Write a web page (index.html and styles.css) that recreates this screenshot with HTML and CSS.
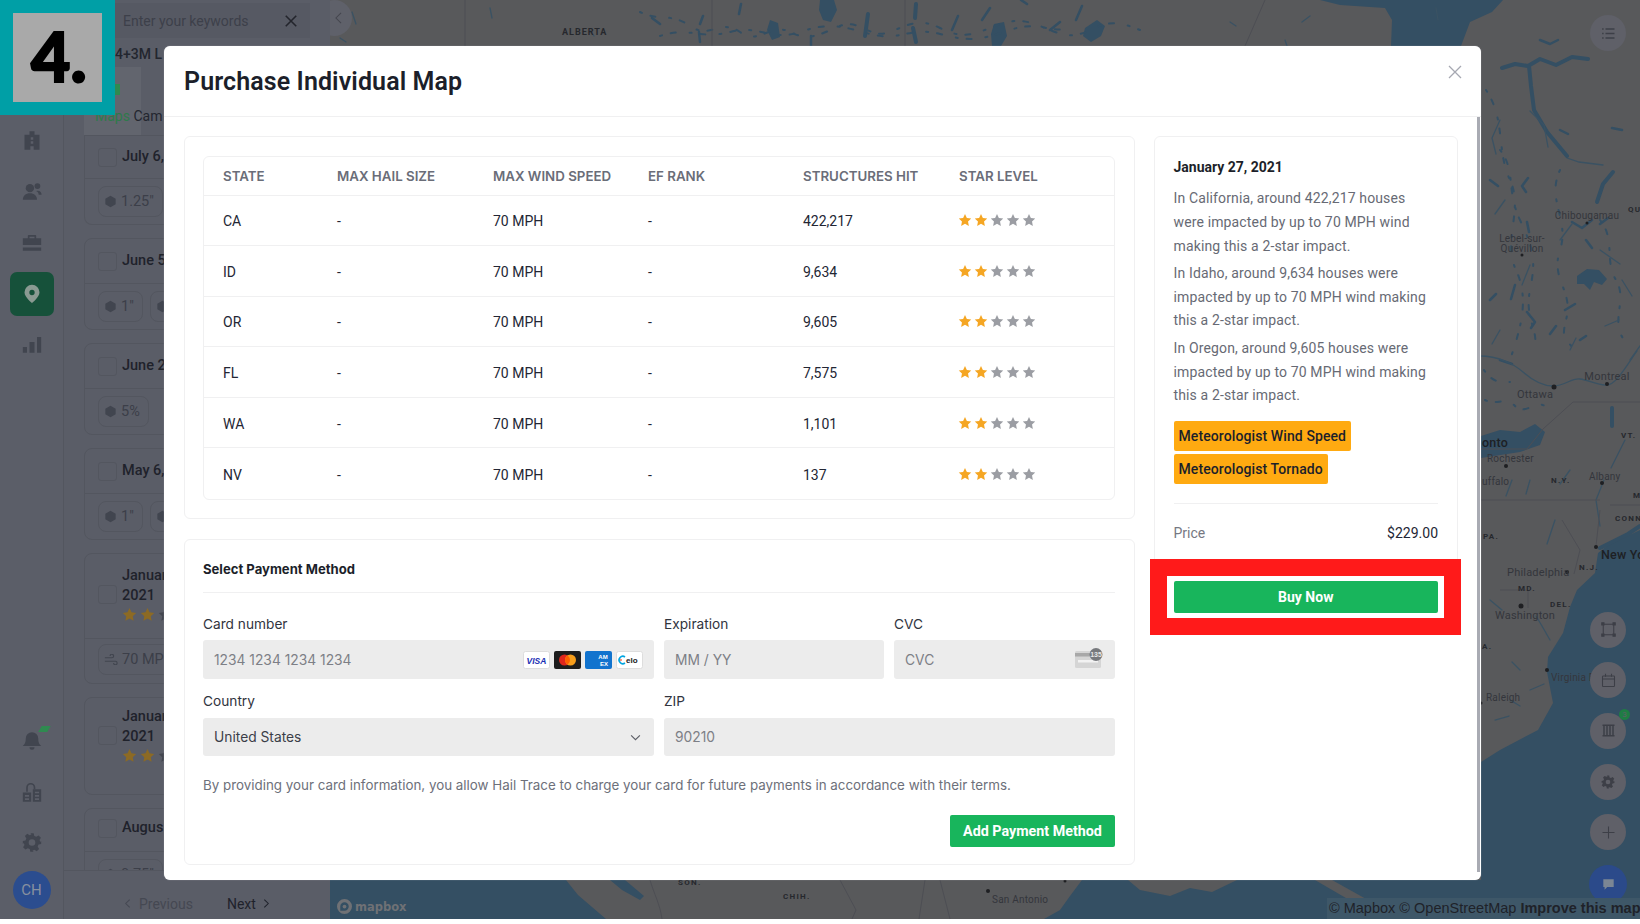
FILE: index.html
```html
<!DOCTYPE html>
<html lang="en">
<head>
<meta charset="utf-8">
<title>Purchase Individual Map</title>
<link rel="stylesheet" href="styles.css">
</head>
<body>
<svg class="defs" width="0" height="0" aria-hidden="true">
  <symbol id="star" viewBox="0 0 24 24"><path d="M12 1.6l3.2 6.9 7.5.9-5.5 5.2 1.4 7.5L12 18.4l-6.6 3.7 1.4-7.5L1.300 9.400l7.500-.9z"/></symbol>
  <symbol id="hex" viewBox="0 0 24 24"><path d="M12 1.500l9.500 5.300v10.400L12 22.500l-9.500-5.300V6.800z"/></symbol>
</svg>
<div class="app">
  <nav class="sidebar">
    <div class="nav-top">
      <svg class="nav-icon" viewBox="0 0 24 24"><path d="M9 1h6v4h6v18H3V5h6zM10.500 8v3h3V8zm0 5v3h3v-3zM10 23h4v-4h-4z" fill-rule="evenodd"/></svg>
      <svg class="nav-icon" viewBox="0 0 24 24"><circle cx="9.500" cy="8" r="5"/><path d="M1 22c0-5 3.500-8 8.500-8s8.500 3 8.500 8z"/><circle cx="18.500" cy="5.500" r="3.500"/><path d="M19 11c3 0 4.500 2 4.500 5H20c0-2-1-3.500-3-4.500z"/></svg>
      <svg class="nav-icon" viewBox="0 0 24 24"><path d="M8 3h8a1 1 0 0 1 1 1v3h6v8H1V7h6V4a1 1 0 0 1 1-1zm1 2v2h6V5zM1 18h22v4H1z" fill-rule="evenodd"/></svg>
      <div class="nav-active"><svg class="pin" viewBox="0 0 24 24"><path d="M12 1a9 9 0 0 1 9 9c0 6-9 13-9 13S3 16 3 10a9 9 0 0 1 9-9zm0 6a3.200 3.200 0 1 0 0 6.400A3.200 3.200 0 0 0 12 7z" fill-rule="evenodd"/></svg></div>
      <svg class="nav-icon" viewBox="0 0 24 24"><path d="M1 15h5v7H1zM9 9h6v13H9zM18 3h5v19h-5z"/></svg>
    </div>
    <div class="nav-bottom">
      <div class="bell-wrap">
        <svg class="nav-icon" viewBox="0 0 24 24"><path d="M12 2a7.500 7.500 0 0 1 7.500 7.500c0 5 1.500 7 3.500 9H1c2-2 3.500-4 3.500-9A7.500 7.500 0 0 1 12 2zM9 20h6a3 3 0 0 1-6 0z"/></svg>
        <span class="bell-badge"></span>
      </div>
      <svg class="nav-icon" viewBox="0 0 24 24"><path d="M1 12h10v11H1zM13 8h10v15H13zM3.500 15v2h5v-2zm0 4v2h5v-2zM15.500 11v2h5v-2zm0 4v2h5v-2zm0 4v2h5v-2z" fill-rule="evenodd"/><path d="M6 11V6a4.500 4.500 0 0 1 9 0v2" fill="none" stroke-width="2" stroke="#41454f"/></svg>
      <svg class="nav-icon nav-gear" viewBox="0 0 24 24"><path d="M10 1h4l.7 3.200 2.400 1 2.800-1.700 2.800 2.800-1.700 2.800 1 2.400L23 10.200v3.600l-3.200.7-1 2.400 1.700 2.800-2.800 2.800-2.800-1.700-2.400 1L14 23h-4l-.7-3.200-2.400-1-2.800 1.700-2.800-2.800 1.700-2.800-1-2.400L1 13.800v-3.600l3.200-.7 1-2.400L3.500 4.300l2.800-2.800 2.800 1.700 2.400-1zM12 8a4 4 0 1 0 0 8 4 4 0 0 0 0-8z" fill-rule="evenodd"/></svg>
      <div class="avatar">CH</div>
    </div>
  </nav>

  <aside class="list">
    <div class="search"><span class="search-text">Enter your keywords</span><svg class="search-x" viewBox="0 0 16 16"><path d="M2 2l12 12M14 2L2 14"/></svg></div>
    <div class="list-title">4+3M L</div>
    <div class="tabs"><div class="tab"><span class="tab-mark"></span><span class="tab-green">Maps</span> <span class="tab-plain">Cam</span></div></div>
    <div class="cards">
      <section class="card card-first">
        <div class="card-head"><span class="check"></span><span class="date">July 6,</span></div>
        <div class="chips"><span class="chip"><svg class="chip-ic"><use href="#hex"/></svg>1.25"</span></div>
      </section>
      <section class="card">
        <div class="card-head"><span class="check"></span><span class="date">June 5</span></div>
        <div class="chips"><span class="chip"><svg class="chip-ic"><use href="#hex"/></svg>1"</span><span class="chip"><svg class="chip-ic"><use href="#hex"/></svg></span></div>
      </section>
      <section class="card">
        <div class="card-head"><span class="check"></span><span class="date">June 2</span></div>
        <div class="chips"><span class="chip"><svg class="chip-ic"><use href="#hex"/></svg>5%</span></div>
      </section>
      <section class="card">
        <div class="card-head"><span class="check"></span><span class="date">May 6,</span></div>
        <div class="chips"><span class="chip"><svg class="chip-ic"><use href="#hex"/></svg>1"</span><span class="chip"><svg class="chip-ic"><use href="#hex"/></svg></span></div>
      </section>
      <section class="card">
        <div class="card-head card-head-tall"><span class="check"></span><div class="date-block"><span class="date">Januar<br>2021</span><span class="mini-stars"><svg class="mini-star"><use href="#star"/></svg><svg class="mini-star"><use href="#star"/></svg><svg class="mini-star off"><use href="#star"/></svg></span></div></div>
        <div class="chips chips-lift"><span class="chip"><svg class="wind" viewBox="0 0 16 12"><path d="M1 4h8a2 2 0 1 0-2-2M1 8h12a2 2 0 1 1-2 2"/></svg>70 MPH</span></div>
      </section>
      <section class="card card-plain">
        <div class="card-head card-head-plain"><span class="check"></span><div class="date-block"><span class="date">Januar<br>2021</span><span class="mini-stars"><svg class="mini-star"><use href="#star"/></svg><svg class="mini-star"><use href="#star"/></svg><svg class="mini-star off"><use href="#star"/></svg></span></div></div>
      </section>
      <section class="card">
        <div class="card-head card-head-short"><span class="check"></span><span class="date">Augus</span></div>
        <div class="chips chips-top"><span class="chip"><svg class="chip-ic"><use href="#hex"/></svg>0.75"</span></div>
      </section>
    </div>
    <footer class="pager">
      <span class="prev"><svg class="pg-ic" viewBox="0 0 8 12"><path d="M6.500 1.500L2 6l4.500 4.500"/></svg>Previous</span>
      <span class="next">Next<svg class="pg-ic" viewBox="0 0 8 12"><path d="M1.500 1.500L6 6l-4.500 4.500"/></svg></span>
    </footer>
  </aside>

  <main class="map">
    <svg class="map-svg" viewBox="330 0 1310 919" preserveAspectRatio="none">
      <g class="water">
        <path d="M330 880H566L578 895 606 919H330z"/>
        <path d="M610 880L625 880 644 896 640 900 622 890z"/>
        <path d="M1082 880L1070 896 1060 910 1044 919H1640V880z"/>
        <path d="M1320 0H1503L1492 12 1470 22 1461 46H1391L1392 20 1385 8 1340 5z"/>
        <path d="M1640 530L1607 546 1598 553 1595 573 1577 590 1570 607 1563 633 1548 657 1547 672 1553 703 1538 730 1500 750 1481 762V880H1640z"/>
        <path d="M1481 436L1500 430 1520 432 1535 424 1545 432 1540 445 1520 452 1481 458z"/>
        <path d="M1577 276l10-7 12 1 8 9-5 6-8-3-4 8-6-6-7 0z"/>
        <path d="M820 0h14l3 10-6 12-8-2-4-10zM1085 28l12-8 8 6-4 10-10 6-8-6zM994 24l10-2 3 14-6 10h-9l-1-12zM770 20l8 3 2 14-8 3-5-10z"/>
      </g>
      <g class="land">
        <path d="M1128 880H1237L1212 892 1190 888 1170 896 1140 890z"/>
        <path d="M1315 880H1332L1402 919H1382z"/>
      </g>
      <g class="lake-thick">
        <path d="M1502 68l13-4 13 2 12-7 16 6 16-8 16 2M1529 66l2 20 3 24 13 22 20 24"/>
        <path d="M1613 172l-10 12-6 18"/>
        <path d="M1612 408v18M1600 548l28-14 12-8"/>
        <path d="M868 14l-3 22M916 4l-1 14M913 28l3 14"/>
      </g>
      <g class="lake-mid">
        <path d="M1528 178l-6 8 4 6M1527 222l2 10M1572 222l10 6 10-8M1586 240l6 8M1527 312l8 10-4 6M1550 334l6-8M1580 340l6-4"/>
        <path d="M741 4l-2 10M703 16l-3 8M699 32l1 10M652 18l8 6M958 16l-6 14M990 8l-8 12M1060 22l-10 8M1082 6l-6 14M811 36l0 10M1021 0l6 4M1500 360l12 4M1490 300l6-6"/>
        <path d="M1540 40l10 4 8-4M1490 180l8 6M1600 224l8-6M1560 130l8 4M1515 285l-4 14M1565 310l10-6M1612 128l10 2"/>
      </g>
      <g class="speckle">
        <path d="M640 12c20 10 30 0 50 14s30-8 50 6 30-10 50 0 30 2 50-6 30 14 50 6 30-14 50-4 30 8 50 0 30-10 50-2 30 14 50 4 30-8 50 0"/>
        <path d="M660 36c30-10 40 4 70-4s40 10 70 0 40-6 70 2 40-8 70 0 40 6 70-4 40 4 60-2"/>
        <path d="M1486 90c20 30 10 60 24 90s-8 60 6 90 4 60-6 90M1500 150c16 20 6 40 20 70s16 40 10 70 10 40 4 60"/>
        <path d="M1560 170c-14 30 10 50 0 80s14 40 6 70 10 20 4 30M1600 220c16 20 4 40 16 60s-6 40 8 60"/>
        <path d="M1485 400c12 6 20-4 30 6s20-6 30 0M1484 370c6 10 16 14 26 12"/>
      </g>
      <g class="rivers">
        <path d="M1480 356c18 0 34 8 43 16s18 14 30 14 18-8 27-7 18 7 27 6 16-14 30-34M1567 158l12 4 24 3M1530 111l14 14 4 22"/>
        <path d="M1500 120l-8 18 4 16M1505 200l-10 14M1560 240l12-16M1530 265l-8 20M1600 250l20 14M1605 326l14-6M1622 280l10 16M1500 330l-8 14M1570 350l6-12M1630 360l10-14"/>
        <path d="M1550 640l-8-14 -6-10M1530 690l14-6M1510 700l10 6M1495 720l14-4M1490 600l12 10M1520 670l-8-8M1555 520l-8 24M1570 470l-10 14M1512 480l-6 16M1530 480l-4 14M1604 480l-8 20 4 26M1625 440l-14 28"/>
        <path d="M352 12l4 12M340 38l6 4M490 8l2 10M590 30l4 6M1230 22l6 4M1302 22l8-6M1436 8l2 12M1285 40l2 6"/>
      </g>
      <g class="lines">
        <path d="M1640 402H1573L1543 429 1527 449H1481"/>
        <path d="M1481 500H1600M1600 510l-4 36M1640 505h-30M1500 590h26M1528 590v18M1562 520l18 30-6 24"/>
        <path d="M465 0v46M712 0v46M905 0v46M1265 0l-20 46M650 880c4 14 10 24 12 39M840 880l16 30 -4 9M925 880l-6 39M940 880l10 39"/>
      </g>
      <g class="dots">
        <circle cx="1587" cy="223" r="1.500"/><circle cx="1522" cy="255" r="1.500"/><circle cx="1607" cy="384" r="2"/><circle cx="1554" cy="387" r="2.500"/><circle cx="1506" cy="466" r="2"/><circle cx="1602" cy="483" r="2"/><circle cx="1596" cy="547" r="2"/><circle cx="1567" cy="572" r="2"/><circle cx="1521" cy="606" r="2.500"/><circle cx="1547" cy="670" r="2"/><circle cx="1481" cy="703" r="1.500"/><circle cx="988" cy="891" r="2"/><circle cx="1065" cy="881" r="1.500"/>
      </g>
      <g class="place">
        <text x="1587" y="219" text-anchor="middle">Chibougamau</text>
        <text x="1522" y="242" text-anchor="middle">Lebel-sur-</text>
        <text x="1522" y="252" text-anchor="middle">Quévillon</text>
        <text x="1607" y="380" text-anchor="middle" class="p-lg">Montreal</text>
        <text x="1535" y="398" text-anchor="middle" class="p-lg">Ottawa</text>
        <text x="1482" y="447" class="p-dark">onto</text>
        <text x="1487" y="462">Rochester</text>
        <text x="1482" y="485">uffalo</text>
        <text x="1589" y="480">Albany</text>
        <text x="1601" y="559" class="p-dark">New York</text>
        <text x="1507" y="576" class="p-lg">Philadelphia</text>
        <text x="1495" y="619" class="p-lg">Washington</text>
        <text x="1551" y="681">Virginia B</text>
        <text x="1486" y="701">Raleigh</text>
        <text x="992" y="903">San Antonio</text>
      </g>
      <g class="region">
        <text x="562" y="35" class="r-alb">ALBERTA</text>
        <text x="1628" y="212">QU</text>
        <text x="1551" y="483">N.Y.</text>
        <text x="1621" y="438">VT.</text>
        <text x="1633" y="498">M</text>
        <text x="1615" y="521">CONN.</text>
        <text x="1483" y="539">PA.</text>
        <text x="1579" y="570">N.J.</text>
        <text x="1518" y="591">MD.</text>
        <text x="1550" y="607">DEL.</text>
        <text x="1482" y="649">A.</text>
        <text x="783" y="899">CHIH.</text>
        <text x="678" y="885">SON.</text>
      </g>
    </svg>
    <div class="back-tab"><svg class="back-ic" viewBox="0 0 8 14"><path d="M7 1L1 7l6 6"/></svg></div>
    <div class="map-tools">
      <div class="tool"><svg class="tool-ic tool-ic-lg" viewBox="0 0 20 20"><path d="M6 4h12M6 10h12M6 16h12M1.500 4h2M1.500 10h2M1.500 16h2" stroke-width="1.800"/></svg></div>
      <div class="tool-stack">
        <div class="tool"><svg class="tool-ic tool-ic-lg" viewBox="0 0 20 20"><rect x="3" y="3" width="14" height="14"/><path d="M1 1h3v3H1zM16 1h3v3h-3zM1 16h3v3H1zM16 16h3v3h-3z" fill="#3d3f47"/></svg></div>
        <div class="tool"><svg class="tool-ic tool-ic-lg" viewBox="0 0 20 20"><rect x="2" y="4" width="16" height="14" rx="1"/><path d="M2 8h16M6 1v4M14 1v4"/></svg></div>
        <div class="tool"><svg class="tool-ic tool-ic-lg" viewBox="0 0 20 20"><path d="M2 3h16M2 17h16M4 3v14M8 3v14M12 3v14M16 3v14" stroke-width="2"/></svg><span class="tool-badge">3</span></div>
        <div class="tool"><svg class="tool-fill" viewBox="0 0 24 24"><path d="M10 1h4l.7 3.200 2.400 1 2.800-1.700 2.800 2.800-1.700 2.800 1 2.400L23 10.200v3.600l-3.200.7-1 2.400 1.700 2.800-2.800 2.800-2.800-1.700-2.400 1L14 23h-4l-.7-3.200-2.400-1-2.800 1.700-2.800-2.800 1.700-2.800-1-2.400L1 13.800v-3.600l3.200-.7 1-2.400L3.500 4.300l2.800-2.800 2.800 1.700 2.400-1zM12 8a4 4 0 1 0 0 8 4 4 0 0 0 0-8z" fill-rule="evenodd"/></svg></div>
        <div class="tool"><svg class="tool-ic tool-ic-lg" viewBox="0 0 20 20"><path d="M10 2v16M2 10h16"/></svg></div>
        <div class="tool tool-chat"><svg class="chat-ic" viewBox="0 0 20 20"><path d="M2 2h16v12H8l-4 4v-4H2z"/></svg></div>
      </div>
    </div>
    <div class="logo"><svg class="logo-ic" viewBox="0 0 16 16"><path d="M8 0a8 8 0 1 1 0 16A8 8 0 0 1 8 0zm0 3.500a4.500 4.500 0 0 0-4.500 4.500v4.500H8a4.500 4.500 0 0 0 0-9z" fill-rule="evenodd"/><circle cx="8" cy="8" r="2"/></svg><span>mapbox</span></div>
    <div class="attrib">© Mapbox © OpenStreetMap <b>Improve this map</b></div>
  </main>
</div>

<div class="modal">
  <header class="modal-head">
    <h1>Purchase Individual Map</h1>
    <svg class="modal-x" viewBox="0 0 14 14"><path d="M1 1l12 12M13 1L1 13"/></svg>
  </header>
  <div class="modal-body">
    <div class="col-main">
      <section class="panel table-panel">
        <div class="table-wrap">
          <table class="impact">
            <thead><tr><th>STATE</th><th>MAX HAIL SIZE</th><th>MAX WIND SPEED</th><th>EF RANK</th><th>STRUCTURES HIT</th><th>STAR LEVEL</th></tr></thead>
            <tbody>
              <tr><td>CA</td><td>-</td><td>70 MPH</td><td>-</td><td>422,217</td><td><span class="stars"><svg class="star on"><use href="#star"/></svg><svg class="star on"><use href="#star"/></svg><svg class="star"><use href="#star"/></svg><svg class="star"><use href="#star"/></svg><svg class="star"><use href="#star"/></svg></span></td></tr>
              <tr><td>ID</td><td>-</td><td>70 MPH</td><td>-</td><td>9,634</td><td><span class="stars"><svg class="star on"><use href="#star"/></svg><svg class="star on"><use href="#star"/></svg><svg class="star"><use href="#star"/></svg><svg class="star"><use href="#star"/></svg><svg class="star"><use href="#star"/></svg></span></td></tr>
              <tr><td>OR</td><td>-</td><td>70 MPH</td><td>-</td><td>9,605</td><td><span class="stars"><svg class="star on"><use href="#star"/></svg><svg class="star on"><use href="#star"/></svg><svg class="star"><use href="#star"/></svg><svg class="star"><use href="#star"/></svg><svg class="star"><use href="#star"/></svg></span></td></tr>
              <tr><td>FL</td><td>-</td><td>70 MPH</td><td>-</td><td>7,575</td><td><span class="stars"><svg class="star on"><use href="#star"/></svg><svg class="star on"><use href="#star"/></svg><svg class="star"><use href="#star"/></svg><svg class="star"><use href="#star"/></svg><svg class="star"><use href="#star"/></svg></span></td></tr>
              <tr><td>WA</td><td>-</td><td>70 MPH</td><td>-</td><td>1,101</td><td><span class="stars"><svg class="star on"><use href="#star"/></svg><svg class="star on"><use href="#star"/></svg><svg class="star"><use href="#star"/></svg><svg class="star"><use href="#star"/></svg><svg class="star"><use href="#star"/></svg></span></td></tr>
              <tr><td>NV</td><td>-</td><td>70 MPH</td><td>-</td><td>137</td><td><span class="stars"><svg class="star on"><use href="#star"/></svg><svg class="star on"><use href="#star"/></svg><svg class="star"><use href="#star"/></svg><svg class="star"><use href="#star"/></svg><svg class="star"><use href="#star"/></svg></span></td></tr>
            </tbody>
          </table>
        </div>
      </section>
      <section class="panel pay-panel">
        <h2>Select Payment Method</h2>
        <div class="form-grid">
          <div class="field f-card">
            <label class="lbl">Card number</label>
            <div class="input"><span>1234 1234 1234 1234</span>
              <span class="brands">
                <svg class="brand" viewBox="0 0 27 18"><rect x=".5" y=".5" width="26" height="17" rx="2" fill="#fff" stroke="#ddd"/><text x="13.500" y="12.500" text-anchor="middle" class="visa">VISA</text></svg>
                <svg class="brand" viewBox="0 0 27 18"><rect width="27" height="18" rx="2" fill="#1d1d1d"/><circle cx="10.500" cy="9" r="5.500" fill="#e0261c"/><circle cx="16.500" cy="9" r="5.500" fill="#f79e1b"/><path d="M13.500 4.400a5.500 5.500 0 0 1 0 9.200 5.500 5.500 0 0 1 0-9.200z" fill="#ff5f00"/></svg>
                <svg class="brand" viewBox="0 0 27 18"><rect width="27" height="18" rx="2" fill="#1173ce"/><text x="18" y="8" text-anchor="middle" class="amex">AM</text><text x="19" y="15" text-anchor="middle" class="amex">EX</text></svg>
                <svg class="brand" viewBox="0 0 27 18"><rect x=".5" y=".5" width="26" height="17" rx="2" fill="#fff" stroke="#ddd"/><path d="M9 6a3.700 3.700 0 1 0 0 6" fill="none" stroke="#00a4e0" stroke-width="1.600"/><path d="M4.200 9h1.500" stroke="#ef4123" stroke-width="1.600"/><text x="10" y="12" class="elo">elo</text></svg>
              </span>
            </div>
          </div>
          <div class="field f-exp">
            <label class="lbl">Expiration</label>
            <div class="input"><span>MM / YY</span></div>
          </div>
          <div class="field f-cvc">
            <label class="lbl">CVC</label>
            <div class="input"><span>CVC</span>
              <svg class="cvc-ic" viewBox="0 0 28 20"><rect x="0" y="3" width="26" height="17" rx="1.500" fill="#d5d5d5"/><rect y="5" width="26" height="3.500" fill="#a8a8a8"/><rect x="3" y="12" width="20" height="2.500" fill="#f2f2f2"/><circle cx="21" cy="6.500" r="6.500" fill="#77797d"/><text x="21" y="9" text-anchor="middle" class="cvc-num">135</text></svg>
            </div>
          </div>
          <div class="field f-country f-row2">
            <label class="lbl">Country</label>
            <div class="input input-dark"><span>United States</span>
              <svg class="chev" viewBox="0 0 12 8"><path d="M1 1.500l5 5 5-5"/></svg>
            </div>
          </div>
          <div class="field f-zip f-row2">
            <label class="lbl">ZIP</label>
            <div class="input"><span>90210</span></div>
          </div>
        </div>
        <p class="terms">By providing your card information, you allow Hail Trace to charge your card for future payments in accordance with their terms.</p>
        <div class="pay-actions"><button class="btn-add">Add Payment Method</button></div>
      </section>
    </div>
    <div class="col-side">
      <section class="panel side-panel">
        <h3>January 27, 2021</h3>
        <p>In California, around 422,217 houses were impacted by up to 70 MPH wind making this a 2-star impact.</p>
        <p>In Idaho, around 9,634 houses were impacted by up to 70 MPH wind making this a 2-star impact.</p>
        <p>In Oregon, around 9,605 houses were impacted by up to 70 MPH wind making this a 2-star impact.</p>
        <div class="badges"><span class="badge">Meteorologist Wind Speed</span><span class="badge">Meteorologist Tornado</span></div>
        <div class="price"><span class="price-l">Price</span><span class="price-v">$229.00</span></div>
        <button class="btn-buy">Buy Now</button>
      </section>
    </div>
  </div>
  <div class="scrollbar"></div>
</div>

<div class="highlight"></div>
<div class="step"><div class="step-inner">4.</div></div>
</body>
</html>
```

FILE: styles.css
```css
* { box-sizing: border-box; }
html, body { margin: 0; padding: 0; background: #fff; }
body { width: 1640px; height: 924px; overflow: hidden; position: relative; font-family: Roboto, "Liberation Sans", sans-serif; color: #1f2430; }
.defs { position: absolute; }

/* background app, dimmed */
.app { display: flex; height: 919px; background: #5a5d67; overflow: hidden; }
.sidebar { width: 64px; flex: none; display: flex; flex-direction: column; justify-content: space-between; align-items: center; padding: 130px 0 10px; border-right: 1px solid #53565f; background: #5b5e68; }
.nav-top, .nav-bottom { display: flex; flex-direction: column; align-items: center; }
.nav-top { gap: 30px; }
.nav-icon { width: 20px; height: 21px; fill: #41454f; display: block; }
.nav-active { width: 44px; height: 44px; margin: -11.500px 0; border-radius: 7px; background: #16513a; display: flex; align-items: center; justify-content: center; }
.pin { width: 20px; height: 22px; fill: #8a9a92; }
.nav-bottom { gap: 31px; }
.nav-gear { margin-top: -2px; }
.bell-wrap { position: relative; }
.bell-badge { position: absolute; left: 18px; top: -4px; width: 9px; height: 6px; background: #2f8a50; transform: skewX(-30deg); }
.avatar { width: 38px; height: 38px; margin-top: -13px; border-radius: 50%; background: #2b4d8f; color: #87909f; font-size: 15px; display: flex; align-items: center; justify-content: center; }

.list { width: 266px; flex: none; display: flex; flex-direction: column; position: relative; background: #5a5d67; }
.search { margin: 3px 20px 0 51px; height: 35px; background: #565963; display: flex; align-items: center; justify-content: space-between; padding: 0 12px 0 8px; }
.search-text { font-size: 14px; color: #3d404a; }
.search-x { width: 14px; height: 14px; fill: none; stroke: #23252c; stroke-width: 1.800; }
.list-title { height: 29px; padding: 7px 0 0 51px; font-size: 14px; font-weight: 500; color: #23262f; line-height: 18px; }
.tabs { height: 69px; display: flex; margin-left: 20px; border-bottom: 1px solid #53565f; font-size: 14px; }
.tab { width: 57px; background: #62656e; padding: 40px 0 0 11px; position: relative; white-space: nowrap; line-height: 18px; }
.tab-green { color: #2e7a4b; }
.tab-plain { color: #23262f; }
.tab-mark { position: absolute; left: 29px; top: 17px; width: 7px; height: 11px; background: #2f8a50; }
.cards { flex: 1; min-height: 0; overflow: hidden; padding: 0 20px; display: flex; flex-direction: column; gap: 13px; }
.card { flex: none; border: 1px solid #53565f; border-radius: 8px; }
.card-first { border-top: 0; border-top-left-radius: 0; border-top-right-radius: 0; }
.card-plain { height: 98px; }
.card-head { height: 45px; display: flex; align-items: center; gap: 5px; padding-left: 13px; border-bottom: 1px solid #53565f; }
.card-first .card-head { height: 43px; }
.card-head-tall { height: 85px; padding-bottom: 4px; }
.card-head-plain { height: 74px; border-bottom: 0; }
.card-head-short { height: 43px; padding-bottom: 4px; }
.check { width: 19px; height: 19px; flex: none; border: 1px solid #53565f; border-radius: 3px; }
.date { font-size: 14.500px; font-weight: 500; line-height: 20px; color: #1f222b; }
.date-block { display: flex; flex-direction: column; }
.mini-stars { display: flex; gap: 3px; margin-top: 1px; }
.mini-star { width: 15px; height: 15px; fill: #8c6a24; }
.mini-star.off { fill: #43464f; }
.chips { height: 45px; display: flex; align-items: center; gap: 7px; padding-left: 13px; }
.chips-top { align-items: flex-start; padding-top: 7px; }
.chips-lift { height: 44px; padding-bottom: 3px; }
.chip { height: 31px; padding: 0 8px 0 5px; border: 1px solid #53565f; border-radius: 8px; display: flex; align-items: center; gap: 4px; color: #3c3f49; font-size: 14.500px; }
.chip-ic { width: 13px; height: 13px; fill: #41454f; }
.wind { width: 14px; height: 11px; fill: none; stroke: #41454f; stroke-width: 1.300; }
.pager { height: 49px; flex: none; display: flex; gap: 34px; padding: 17px 0 0 60px; border-top: 1px solid #53565f; background: #5a5d67; font-size: 14px; line-height: 18px; }
.prev { color: #454852; display: flex; align-items: center; gap: 8px; }
.next { color: #1f222b; display: flex; align-items: center; gap: 7px; }
.pg-ic { width: 7px; height: 11px; fill: none; stroke: currentColor; stroke-width: 1.200; }

/* map */
.map { flex: 1; position: relative; background: #58595b; overflow: hidden; }
.map-svg { display: block; width: 100%; height: 100%; }
.water path { fill: #344f63; }
.land path { fill: #58595b; }
.lake-thick path { fill: none; stroke: #344f63; stroke-width: 4; stroke-linecap: round; stroke-linejoin: round; }
.lake-mid path { fill: none; stroke: #344f63; stroke-width: 2.500; stroke-linecap: round; stroke-linejoin: round; }
.speckle path { fill: none; stroke: #344f63; stroke-width: 2; stroke-linecap: round; stroke-dasharray: 2 9 5 14; }
.rivers path { fill: none; stroke: #3a5263; stroke-width: 1.300; stroke-linecap: round; }
.lines path { fill: none; stroke: #4d4e54; stroke-width: 1; }
.dots circle { fill: #1e1f22; }
.place text { font-family: Roboto, sans-serif; font-size: 10px; letter-spacing: .2px; fill: #34363c; }
.place .p-lg { font-size: 11px; }
.place .p-dark { font-size: 12.500px; font-weight: 500; fill: #1e2024; }
.region text { font-family: Roboto, sans-serif; font-size: 8px; font-weight: 700; letter-spacing: 1.300px; fill: #26282d; }
.region .r-alb { font-size: 9px; letter-spacing: 1px; }
.back-tab { position: absolute; left: -14px; top: 0; width: 36px; height: 36px; border-radius: 50%; background: #5f616a; display: flex; align-items: center; justify-content: flex-end; padding-right: 10px; }
.back-ic { width: 7px; height: 12px; fill: none; stroke: #44464e; stroke-width: 1.200; }
.map-tools { position: absolute; right: 14px; top: 15px; bottom: 16px; width: 36px; display: flex; flex-direction: column; justify-content: space-between; align-items: center; }
.tool { width: 36px; height: 36px; flex: none; border-radius: 50%; background: #5f6068; display: flex; align-items: center; justify-content: center; position: relative; }
.tool-stack { display: flex; flex-direction: column; gap: 14.700px; align-items: center; }
.tool-ic { fill: none; stroke: #3d3f47; stroke-width: 1.400; }
.tool-ic-lg { width: 15px; height: 15px; }
.tool-fill { width: 14px; height: 14px; fill: #3d3f47; }
.tool-badge { position: absolute; right: -4px; top: -4px; width: 11px; height: 11px; border-radius: 50%; background: #1f7d44; color: #5f6068; font-size: 8px; line-height: 11px; text-align: center; }
.tool-chat { width: 38px; height: 38px; background: #2b4a8a; }
.chat-ic { width: 13px; height: 13px; fill: #7b8694; }
.logo { position: absolute; left: 7px; bottom: 5px; display: flex; align-items: center; gap: 3px; color: #6f7175; font-family: "DejaVu Sans", sans-serif; font-size: 11.500px; font-weight: 700; }
.logo-ic { width: 15px; height: 15px; fill: #6f7175; }
.attrib { position: absolute; right: 0; bottom: 0; height: 21px; width: 313px; background: #3e5768; color: #1f2229; font-family: "Liberation Sans", sans-serif; font-size: 14.500px; line-height: 21px; padding-left: 2px; white-space: nowrap; overflow: hidden; }

/* modal */
.modal { position: absolute; left: 164px; top: 46px; width: 1317px; height: 834px; background: #fff; border-radius: 6px; overflow: hidden; box-shadow: 0 0 1px #b8bac2; }
.modal-head { height: 71px; border-bottom: 1px solid #f0f0f1; display: flex; align-items: center; justify-content: space-between; padding: 0 19px 0 20px; }
.modal-head h1 { margin: 0; font-size: 25px; font-weight: 600; letter-spacing: .1px; color: #1c1f2a; }
.modal-x { width: 14px; height: 14px; margin-top: -19px; fill: none; stroke: #a6a8b2; stroke-width: 1.300; }
.modal-body { display: flex; gap: 19px; padding: 19px 0 0 20px; align-items: flex-start; }
.col-main { width: 951px; flex: none; display: flex; flex-direction: column; gap: 20px; }
.col-side { width: 304px; flex: none; }
.panel { border: 1px solid #f0f0f1; border-radius: 6px; background: #fff; }
.table-panel { height: 383px; padding: 19px 19px 19px 18px; }
.table-wrap { border: 1px solid #f0f0f1; border-radius: 6px; overflow: hidden; }
.impact { width: 100%; border-collapse: collapse; table-layout: fixed; font-size: 14px; }
.impact th { height: 38px; padding: 0 0 0 18px; text-align: left; font-family: Inter, sans-serif; font-size: 13.300px; font-weight: 600; color: #6a6d78; border-bottom: 1px solid #f0f0f1; }
.impact th:nth-child(1) { width: 115px; padding-left: 19px; }
.impact th:nth-child(2) { width: 156px; }
.impact th:nth-child(3) { width: 155px; }
.impact th:nth-child(4) { width: 155px; }
.impact th:nth-child(5) { width: 156px; }
.impact td { height: 50.600px; padding: 2px 0 0 18px; color: #232634; border-bottom: 1px solid #f0f0f1; }
.impact td:first-child { padding-left: 19px; }
.impact td:last-child { padding-left: 17px; }
.impact tr:last-child td { border-bottom: 0; }
.stars { display: flex; gap: 2px; margin-top: -2px; }
.star { width: 14px; height: 14px; fill: #9b9da3; }
.star.on { fill: #f5a623; }
.pay-panel { height: 326px; padding: 19px 19px 0 18px; }
.pay-panel h2 { margin: 0; height: 34px; font-family: Inter, sans-serif; font-size: 13.100px; font-weight: 700; line-height: 20px; color: #1c1f2a; border-bottom: 1px solid #f0f0f1; }
.form-grid { display: grid; grid-template-columns: 451px 220px 221px; gap: 0 10px; margin-top: 21px; }
.f-zip { grid-column: 2 / 4; }
.lbl { display: block; height: 26px; font-family: Inter, sans-serif; font-size: 13.700px; line-height: 20px; color: #31343e; }
.field { padding-bottom: 12px; }
.f-row2 .lbl { height: 27px; }
.input { height: 39px; padding: 0 12px 0 11px; background: #ececec; border-radius: 3px; display: flex; align-items: center; justify-content: space-between; font-family: Inter, sans-serif; font-size: 13.800px; color: #7d7f86; }
.f-row2 .input { height: 38px; }
.input-dark { color: #3b3e48; }
.brands { display: flex; gap: 4px; margin-right: -1px; }
.brand { width: 27px; height: 18px; display: block; }
.visa { font: italic 800 8.500px "Liberation Sans", sans-serif; fill: #1a2fb4; }
.amex { font: 700 6px "Liberation Sans", sans-serif; fill: #fff; }
.elo { font: 700 8px "Liberation Sans", sans-serif; fill: #222; }
.cvc-ic { width: 28px; height: 20px; margin-top: -3px; }
.cvc-num { font: 700 7px "Liberation Sans", sans-serif; fill: #e6e6e6; }
.chev { width: 11px; height: 7px; fill: none; stroke: #5c5e66; stroke-width: 1.300; margin-right: 1px; }
.terms { margin: 7px 0 0; font-family: Inter, sans-serif; font-size: 13.370px; line-height: 20px; color: #6d707a; }
.pay-actions { display: flex; justify-content: flex-end; margin-top: 20px; }
.btn-add { width: 165px; height: 32px; border: 0; border-radius: 2px; background: #18b55c; color: #fff; font-family: Roboto, sans-serif; font-size: 14.300px; font-weight: 700; }
.side-panel { height: 490px; padding: 20px 19px 0 18.500px; }
.side-panel h3 { margin: 0 0 10px; font-size: 14px; font-weight: 700; line-height: 20px; color: #1c1f2a; }
.side-panel p { margin: 0 0 3.500px; max-width: 258px; font-size: 14px; letter-spacing: .14px; line-height: 23.800px; color: #676a74; }
.badges { display: flex; flex-direction: column; align-items: flex-start; gap: 3px; margin-top: 12.500px; padding-bottom: 19px; border-bottom: 1px solid #f0f0f1; }
.badge { height: 30px; padding: 0 5px; border-radius: 2px; background: #ffaa11; color: #1c1f2a; font-size: 14px; font-weight: 500; letter-spacing: .1px; line-height: 30px; }
.price { display: flex; justify-content: space-between; align-items: center; height: 58px; font-size: 14px; }
.price-l { color: #767882; }
.price-v { color: #232634; }
.btn-buy { display: block; width: 100%; height: 32px; margin-top: 19px; padding: 1px 0 0; border: 0; border-radius: 2px; background: #18b55c; color: #fff; font-family: Roboto, sans-serif; font-size: 14px; font-weight: 700; }
.scrollbar { position: absolute; right: 1px; top: 71px; bottom: 8px; width: 3px; background: #a9abb3; }

/* tutorial annotations */
.highlight { position: absolute; left: 1150px; top: 559px; width: 311px; height: 76px; border: 17px solid #ff1a1a; }
.step { position: absolute; left: 0; top: 0; width: 115px; height: 115px; padding: 13px; background: #009fa6; }
.step-inner { width: 89px; height: 89px; background: #a9a9a9; color: #000; font-family: Lato, sans-serif; font-weight: 900; font-size: 68px; line-height: 86px; padding-left: 18px; -webkit-text-stroke: 2px #000; }
```
